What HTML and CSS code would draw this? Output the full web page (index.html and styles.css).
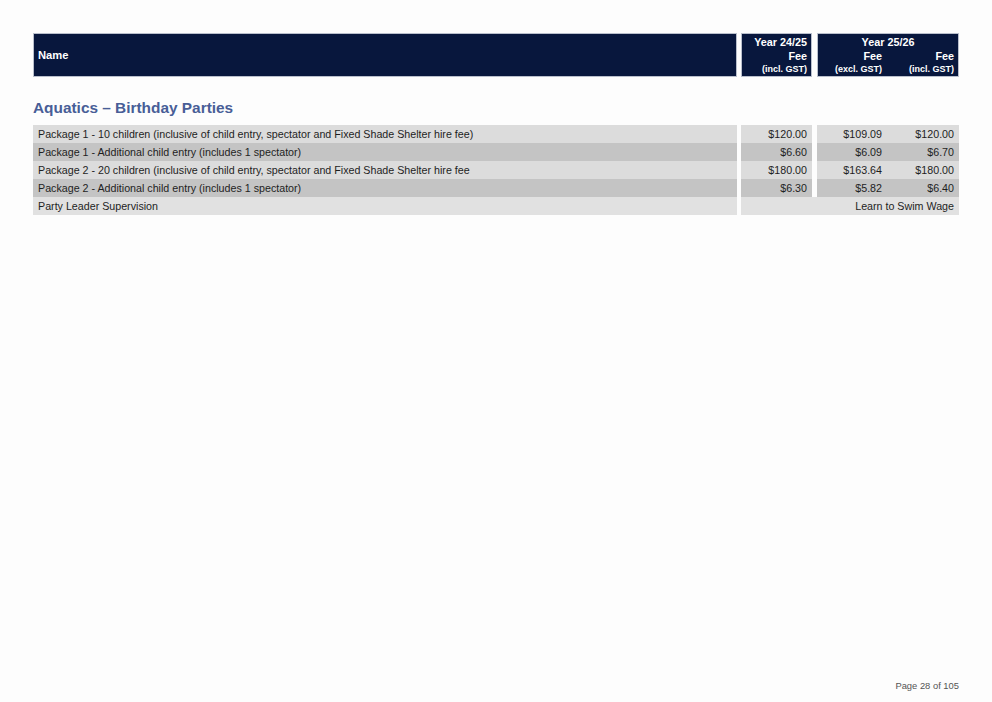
FILE: index.html
```html
<!DOCTYPE html>
<html>
<head>
<meta charset="utf-8">
<link rel="stylesheet" href="styles.css">
</head>
<body>
<div class="page">
  <div class="thead">
    <div class="th th-name">Name</div>
    <div class="th th-y1">
      <div class="yr">Year 24/25</div>
      <div class="fee">Fee</div>
      <div class="gst">(incl. GST)</div>
    </div>
    <div class="th th-y2">
      <div class="yr yr-c">Year 25/26</div>
      <div class="sub">
        <div class="subcol">
          <div class="fee">Fee</div>
          <div class="gst">(excl. GST)</div>
        </div>
        <div class="subcol">
          <div class="fee">Fee</div>
          <div class="gst">(incl. GST)</div>
        </div>
      </div>
    </div>
  </div>

  <h2 class="section">Aquatics – Birthday Parties</h2>

  <div class="rows">
    <div class="row light">
      <div class="td name">Package 1 - 10 children (inclusive of child entry, spectator and Fixed Shade Shelter hire fee)</div>
      <div class="td c1">$120.00</div>
      <div class="grp"><div class="td c2">$109.09</div><div class="td c3">$120.00</div></div>
    </div>
    <div class="row dark">
      <div class="td name">Package 1 - Additional child entry (includes 1 spectator)</div>
      <div class="td c1">$6.60</div>
      <div class="grp"><div class="td c2">$6.09</div><div class="td c3">$6.70</div></div>
    </div>
    <div class="row light">
      <div class="td name">Package 2 - 20 children (inclusive of child entry, spectator and Fixed Shade Shelter hire fee</div>
      <div class="td c1">$180.00</div>
      <div class="grp"><div class="td c2">$163.64</div><div class="td c3">$180.00</div></div>
    </div>
    <div class="row dark">
      <div class="td name">Package 2 - Additional child entry (includes 1 spectator)</div>
      <div class="td c1">$6.30</div>
      <div class="grp"><div class="td c2">$5.82</div><div class="td c3">$6.40</div></div>
    </div>
    <div class="row light last">
      <div class="td name">Party Leader Supervision</div>
      <div class="td span">Learn to Swim Wage</div>
    </div>
  </div>

  <div class="footer">Page 28 of 105</div>
</div>
</body>
</html>
```
FILE: styles.css
```css
html, body {
  margin: 0;
  padding: 0;
  background: #fdfdfd;
}
body {
  font-family: "Liberation Sans", Arial, sans-serif;
  color: #1e1e1e;
}
.page {
  width: 992px;
  height: 702px;
  padding: 33px 33px 0 33px;
  box-sizing: border-box;
  display: flex;
  flex-direction: column;
}
.thead {
  display: flex;
  height: 44px;
}
.th {
  background: #08173d;
  color: #fff;
  font-weight: bold;
  box-sizing: border-box;
  border: 1px solid #b9bfcc;
}
.th-name {
  width: 704px;
  font-size: 11.2px;
  display: flex;
  align-items: center;
  padding-left: 4px;
  padding-top: 0;
}
.th-y1 {
  width: 71px;
  margin-left: 4px;
  text-align: right;
  padding: 1px 4px 0 0;
}
.th-y2 {
  width: 142px;
  margin-left: 5px;
  padding-top: 1px;
}
.yr {
  font-size: 10.8px;
  line-height: 15px;
}
.yr-c {
  text-align: center;
}
.fee {
  font-size: 10.8px;
  line-height: 13px;
}
.gst {
  font-size: 9px;
  line-height: 13px;
}
.sub {
  display: flex;
}
.subcol {
  width: 71px;
  text-align: right;
  padding-right: 4px;
  box-sizing: border-box;
}
.subcol:first-child {
  padding-right: 6px;
}
.section {
  margin: 20px 0 0 0;
  height: 28px;
  font-size: 15.4px;
  line-height: 22px;
  font-weight: bold;
  color: #485e97;
}
.rows {
  display: flex;
  flex-direction: column;
}
.row {
  display: flex;
  height: 18px;
}
.td {
  font-size: 10.7px;
  line-height: 18px;
  box-sizing: border-box;
  white-space: nowrap;
}
.name {
  width: 704px;
  padding-left: 5px;
}
.c1 {
  width: 71px;
  margin-left: 4px;
  text-align: right;
  padding-right: 5px;
}
.grp {
  display: flex;
  margin-left: 5px;
}
.c2, .c3 {
  width: 71px;
  text-align: right;
  padding-right: 5px;
}
.c2 {
  padding-right: 6px;
}
.span {
  width: 218px;
  margin-left: 4px;
  text-align: right;
  padding-right: 5px;
}
.light .td { background: #dcdcdc; }
.dark .td { background: #c4c4c4; }
.last .td { background: #e1e1e1; }
.footer {
  margin-top: auto;
  margin-bottom: 10px;
  text-align: right;
  font-size: 9.4px;
  line-height: 12px;
  color: #555;
}
```
